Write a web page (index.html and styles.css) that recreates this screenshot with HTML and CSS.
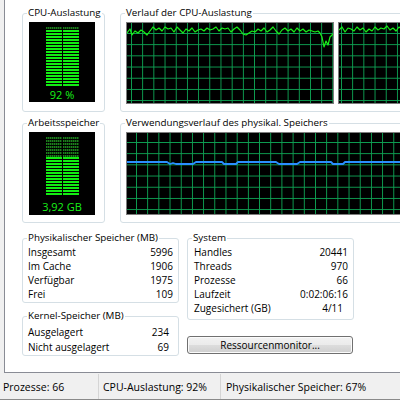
FILE: index.html
```html
<!DOCTYPE html>
<html lang="de">
<head>
<meta charset="utf-8">
<title>Task-Manager – Leistung</title>
<link rel="stylesheet" href="styles.css">
</head>
<body>
<div class="window">
  <div class="tabpage">
    <div class="row row1">
      <fieldset class="group meter-group">
        <legend>CPU-Auslastung</legend>
        <div class="meter meter-cpu">
          <div class="bars">
            <div class="col"><div class="dim dim-cpu"></div><div class="lit"></div></div>
            <div class="col"><div class="dim dim-cpu"></div><div class="lit"></div></div>
          </div>
          <div class="meter-label">92 %</div>
        </div>
      </fieldset>
      <fieldset class="group history-group">
        <legend>Verlauf der CPU-Auslastung</legend>
        <div class="graphs">
          <div class="graph graph-cpu graph-cpu1">
            <svg class="plot" aria-hidden="true">
              <polyline class="cpu-line" points="0,10 3,6 5,12 8,8 11,10 14,7 17,9 20,12 23,8 26,4 29,7 32,5 35,8 38,4 41,6 44,5 47,9 50,4 53,7 56,10 59,6 62,8 65,5 68,9 71,7 74,6 77,8 80,5 83,7 86,6 89,4 92,8 95,5 98,6 101,5 104,9 107,6 110,4 113,7 116,11 119,12 122,10 125,8 128,9 131,6 134,8 137,5 140,9 143,7 146,4 149,8 152,11 155,7 158,5 161,8 164,6 167,9 170,5 173,8 176,6 179,9 182,7 185,8 188,9 191,8 193,10 195,14 197,24 199,18 201,22 203,14 205,12 207,10"/>
            </svg>
          </div>
          <div class="graph graph-cpu graph-cpu2">
            <svg class="plot" aria-hidden="true">
              <polyline class="cpu-line" points="0,7 3,4 6,9 9,5 12,6 15,8 18,4 21,7 24,5 27,9 30,6 33,8 36,4 39,7 42,5 45,6 48,3 51,7 54,5 57,8 60,4 63,6 66,9 69,5 72,7 75,4 78,6 81,8 84,5 87,7 90,4 93,6 96,8"/>
            </svg>
          </div>
        </div>
      </fieldset>
    </div>

    <div class="row row2">
      <fieldset class="group meter-group">
        <legend>Arbeitsspeicher</legend>
        <div class="meter meter-mem">
          <div class="bars">
            <div class="col"><div class="dim dim-mem"></div><div class="lit"></div></div>
            <div class="col"><div class="dim dim-mem"></div><div class="lit"></div></div>
          </div>
          <div class="meter-label">3,92 GB</div>
        </div>
      </fieldset>
      <fieldset class="group history-group">
        <legend>Verwendungsverlauf des physikal. Speichers</legend>
        <div class="graphs">
          <div class="graph graph-mem">
            <svg class="plot" aria-hidden="true">
              <polyline class="mem-line" points="0,29 40,29 43,31 46,30 49,31 66,31 69,29 95,29 97,31 109,31 111,29 149,29 152,31 170,31 173,29 204,29 206,31 216,31 218,29 320,29"/>
            </svg>
          </div>
        </div>
      </fieldset>
    </div>

    <div class="row row3">
      <div class="column column-left">
        <fieldset class="group info-group phys">
          <legend>Physikalischer Speicher (MB)</legend>
          <div class="kv"><span>Insgesamt</span><span>5996</span></div>
          <div class="kv"><span>Im Cache</span><span>1906</span></div>
          <div class="kv"><span>Verfügbar</span><span>1975</span></div>
          <div class="kv"><span>Frei</span><span>109</span></div>
        </fieldset>
        <fieldset class="group info-group kernel">
          <legend>Kernel-Speicher (MB)</legend>
          <div class="kv"><span>Ausgelagert</span><span>234</span></div>
          <div class="kv"><span>Nicht ausgelagert</span><span>69</span></div>
        </fieldset>
      </div>
      <div class="column column-right">
        <fieldset class="group info-group system">
          <legend>System</legend>
          <div class="kv"><span>Handles</span><span>20441</span></div>
          <div class="kv"><span>Threads</span><span>970</span></div>
          <div class="kv"><span>Prozesse</span><span>66</span></div>
          <div class="kv"><span>Laufzeit</span><span>0:02:06:16</span></div>
          <div class="kv"><span>Zugesichert (GB)</span><span class="shift">4/11</span></div>
        </fieldset>
        <button class="button" type="button">Ressourcenmonitor...</button>
      </div>
    </div>
  </div>

  <div class="statusbar">
    <div class="panel panel1">Prozesse: 66</div>
    <div class="panel panel2">CPU-Auslastung: 92%</div>
    <div class="panel panel3">Physikalischer Speicher: 67%</div>
  </div>
</div>
</body>
</html>
```

FILE: styles.css
```css
* { box-sizing: border-box; }

html, body {
  margin: 0;
  width: 400px;
  height: 400px;
  overflow: hidden;
}

body {
  background: #f0f0f0;
  font-family: "Open Sans", "Noto Sans", sans-serif;
  font-size: 10px;
  color: #000;
}

.window {
  display: flex;
  flex-direction: column;
  width: 400px;
  height: 400px;
}

.tabpage {
  margin-left: 4px;
  width: 460px;
  height: 373px;
  flex: none;
  background: #fff;
  border-left: 1px solid #898c95;
  border-bottom: 1px solid #898c95;
  padding: 6px 0 0 17px;
  display: flex;
  flex-direction: column;
}

.row { display: flex; }
.row1, .row2 { gap: 15px; }
.row2 { margin-top: 4px; }
.row3 { margin-top: 8px; gap: 8px; }

.group {
  margin: 0;
  padding: 0;
  min-width: 0;
  border: 1px solid #d5dfe5;
  border-radius: 3px;
}

.group legend {
  margin-left: 4px;
  padding: 0 1px;
  line-height: 14px;
  font-size: 9.8px;
}

.meter-group { width: 83px; flex: none; }
.history-group { flex: 1; }

/* meters */
.meter {
  margin: 2px 9px 0 6px;
  width: 66px;
  background: #000;
  display: flex;
  flex-direction: column;
  align-items: center;
}
.meter-cpu { height: 80px; margin-bottom: 9px; }
.meter-mem { height: 83px; margin-bottom: 7px; }

.bars {
  margin-top: 5px;
  height: 59px;
  display: flex;
  gap: 1px;
}
.col {
  width: 16px;
  display: flex;
  flex-direction: column;
}
.dim {
  background:
    repeating-linear-gradient(to bottom, transparent 0 2px, #000 2px 3px),
    repeating-linear-gradient(to right, #1d7d1d 0 1px, #0b3f0b 1px 2px);
}
.dim-cpu { height: 3px; }
.dim-mem { height: 20px; }
.lit {
  flex: 1;
  background: repeating-linear-gradient(to bottom, #12ee12 0 2px, #000 2px 3px);
}

.meter-label {
  color: #18f018;
  font-size: 11px;
  line-height: 14px;
}
.meter-cpu .meter-label { margin-top: 2px; }
.meter-mem .meter-label { margin-top: 4px; }

/* history graphs */
.graphs {
  display: flex;
  gap: 4px;
  margin: 2px 0 0 5px;
}
.graph {
  flex: none;
  position: relative;
  border: 1px solid #7d7d7d;
  background-color: #000;
  background-image:
    linear-gradient(to right, #0ea052 1.2px, transparent 1.2px),
    linear-gradient(to bottom, #0ea052 1.2px, transparent 1.2px);
  background-size: 11.2px 11.2px;
}
.graph-cpu { width: 208px; height: 82px; }
.graph-cpu1 { background-position: 4px 10px; }
.graph-cpu2 { background-position: 2px 10px; }
.graph-mem {
  width: 330px;
  height: 83px;
  background-position: 9px 9px;
}

.plot {
  position: absolute;
  inset: 0;
  width: 100%;
  height: 100%;
}
.cpu-line {
  fill: none;
  stroke: #19f019;
  stroke-width: 1.2;
  stroke-linejoin: round;
}
.mem-line {
  fill: none;
  stroke: #2a8fff;
  stroke-width: 1.8;
  stroke-linejoin: round;
}

/* info groups */
.column { display: flex; flex-direction: column; }
.column-left { width: 157px; }
.column-right { width: 167px; }

.kv {
  display: flex;
  justify-content: space-between;
  line-height: 14px;
  white-space: nowrap;
}
.phys { padding-bottom: 1px; }
.phys .kv { padding: 0 5px; }
.kernel { margin-top: 6px; padding-top: 2px; }
.kernel .kv { line-height: 15px; padding: 0 9px 0 5px; }
.system { padding-bottom: 4px; }
.system .kv { padding: 0 5px 0 6px; }
.shift { padding-right: 5px; }

.button {
  margin-top: 16px;
  width: 166px;
  height: 18px;
  padding: 0;
  font-family: inherit;
  font-size: 10px;
  color: #000;
  border: 1px solid #707070;
  border-radius: 3px;
  background: linear-gradient(#f2f2f2 0%, #ebebeb 50%, #dddddd 50%, #cfcfcf 100%);
  box-shadow: inset 0 0 0 1px #fbfbfb;
}

/* status bar */
.statusbar {
  flex: 1;
  display: flex;
  margin-top: 1px;
  font-size: 10.5px;
  border-bottom: 1px solid #8a8a8a;
}
.panel {
  display: flex;
  align-items: center;
  padding-left: 4px;
  border-right: 1px solid #d5d5d5;
  white-space: nowrap;
}
.panel1 { width: 99px; padding-left: 3px; }
.panel2 { width: 122px; }
.panel3 { flex: 1; padding-left: 5px; border-right: none; }
```
